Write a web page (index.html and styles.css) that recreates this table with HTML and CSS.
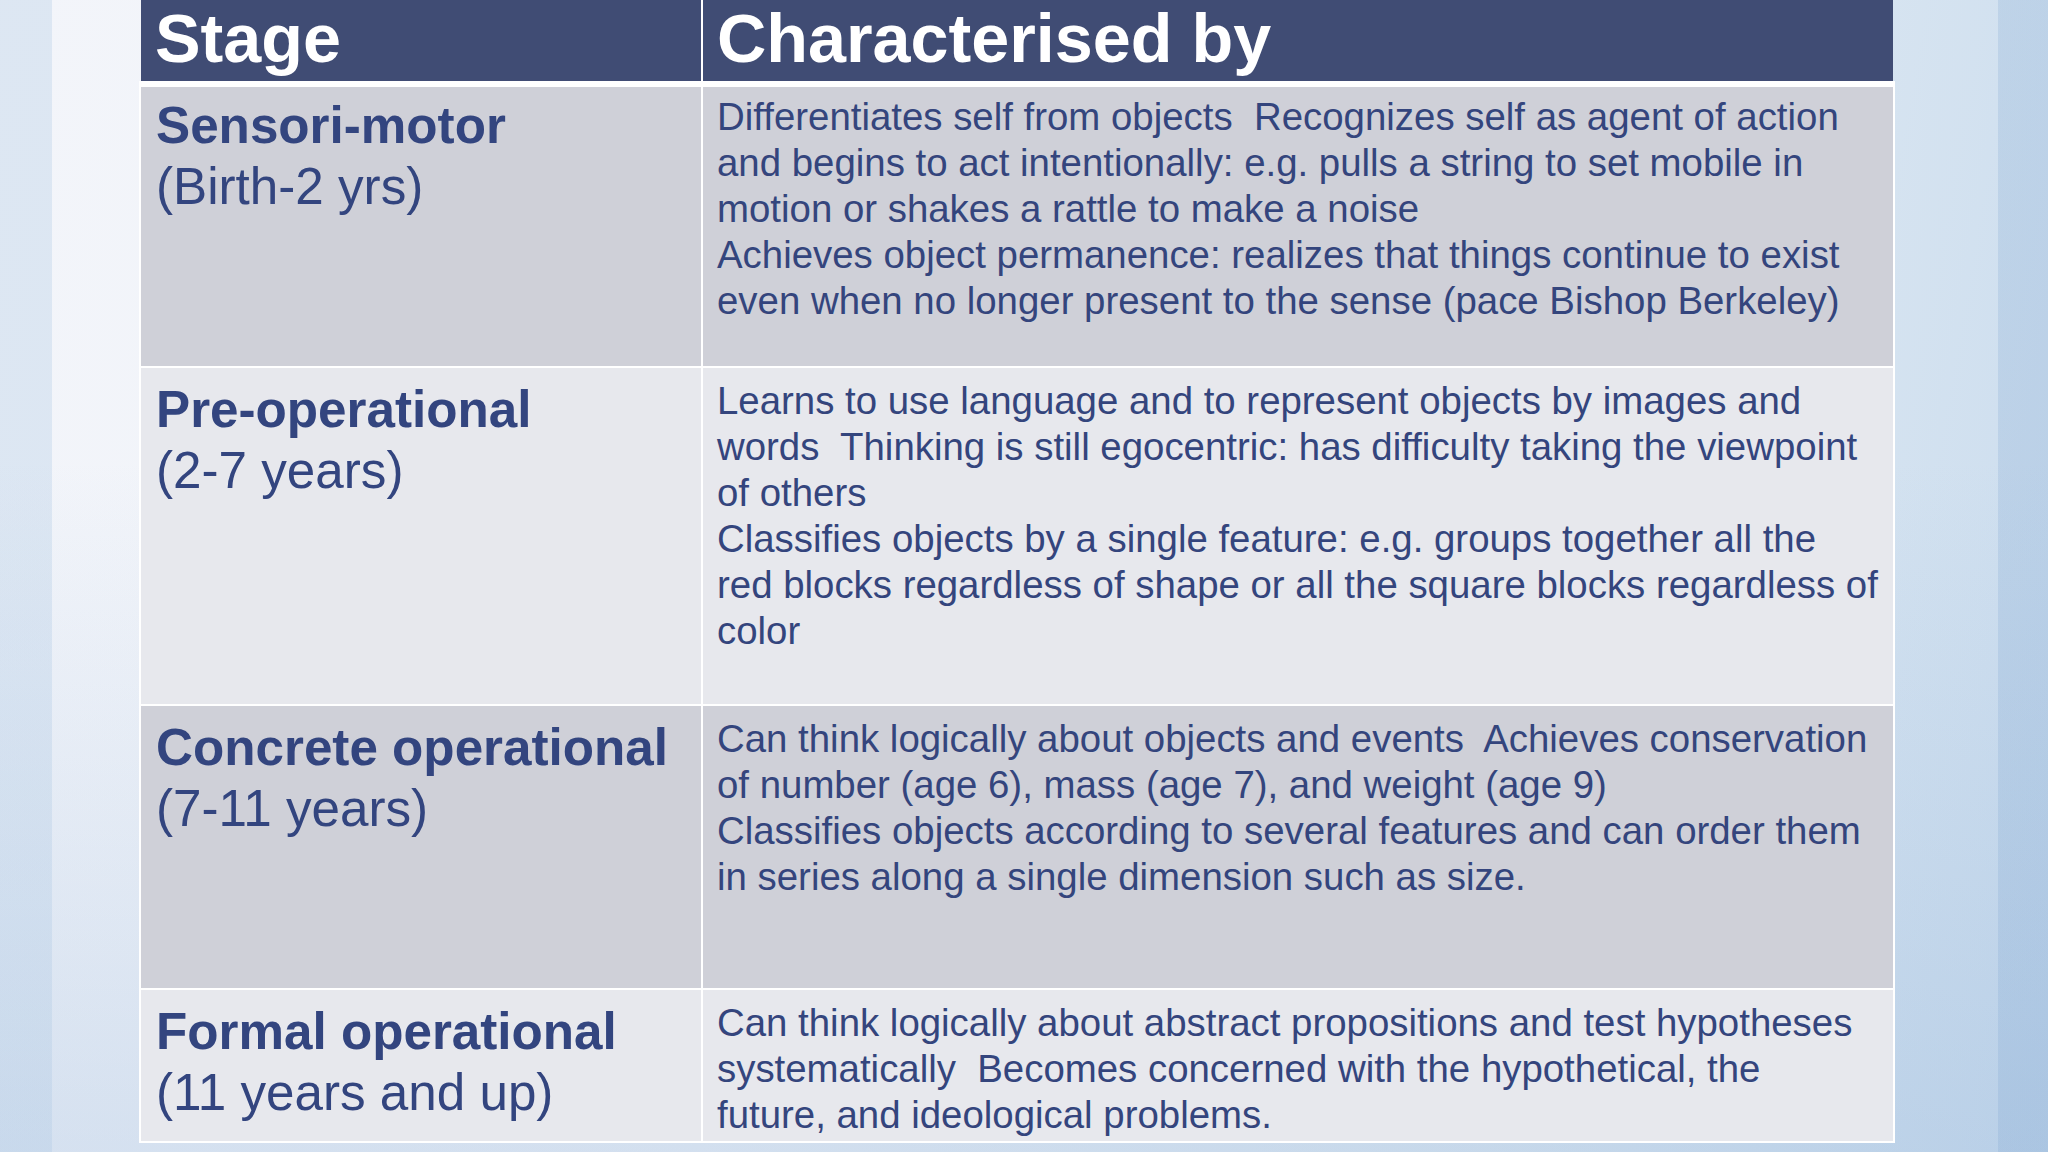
FILE: index.html
```html
<!DOCTYPE html>
<html lang="en">
<head>
<meta charset="utf-8">
<title>Piaget's stages</title>
<link rel="stylesheet" href="styles.css">
</head>
<body>
<main class="slide">
  <section class="table">
    <div class="head">
      <div class="hcell">Stage</div>
      <div class="hcell">Characterised by</div>
    </div>
    <div class="rows">
      <div class="stage odd first"><strong>Sensori-motor</strong><br>(Birth-2 yrs)</div>
      <div class="desc odd first">Differentiates self from objects&nbsp; Recognizes self as agent of action<br>and begins to act intentionally: e.g. pulls a string to set mobile in<br>motion or shakes a rattle to make a noise<br>Achieves object permanence: realizes that things continue to exist<br>even when no longer present to the sense (pace Bishop Berkeley)</div>

      <div class="stage even"><strong>Pre-operational</strong><br>(2-7 years)</div>
      <div class="desc even">Learns to use language and to represent objects by images and<br>words&nbsp; Thinking is still egocentric: has difficulty taking the viewpoint<br>of others<br>Classifies objects by a single feature: e.g. groups together all the<br>red blocks regardless of shape or all the square blocks regardless of<br>color</div>

      <div class="stage odd"><strong>Concrete operational</strong><br>(7-11 years)</div>
      <div class="desc odd">Can think logically about objects and events&nbsp; Achieves conservation<br>of number (age 6), mass (age 7), and weight (age 9)<br>Classifies objects according to several features and can order them<br>in series along a single dimension such as size.</div>

      <div class="stage even"><strong>Formal operational</strong><br>(11 years and up)</div>
      <div class="desc even">Can think logically about abstract propositions and test hypotheses<br>systematically&nbsp; Becomes concerned with the hypothetical, the<br>future, and ideological problems.</div>
    </div>
  </section>
</main>
</body>
</html>
```

FILE: styles.css
```css
html, body {
  margin: 0;
  padding: 0;
  width: 2048px;
  height: 1152px;
  overflow: hidden;
}

body {
  font-family: "Liberation Sans", Arial, sans-serif;
  background:
    linear-gradient(to right,
      rgba(170, 198, 226, 0.30) 0, rgba(170, 198, 226, 0.30) 52px,
      rgba(255, 255, 255, 0) 52px, rgba(255, 255, 255, 0) 1998px,
      rgba(120, 160, 205, 0.22) 1998px),
    linear-gradient(to bottom, rgba(140, 175, 215, 0) 40%, rgba(140, 175, 215, 0.28) 100%),
    linear-gradient(100deg, #f3f5fa 0%, #eef2f8 40%, #dde8f2 75%, #cadcee 100%);
}

.slide {
  display: flex;
  padding-left: 139px;
}

.table {
  width: 1756px;
  display: flex;
  flex-direction: column;
}

.head {
  display: grid;
  grid-template-columns: 560px 1190px;
  column-gap: 2px;
  margin: 0 2px;
  height: 81px;
  background: #ffffff;
}

.hcell {
  background: #404c74;
  color: #ffffff;
  font-weight: bold;
  font-size: 68.3px;
  line-height: 77px;
  padding-left: 14px;
}

.rows {
  display: grid;
  grid-template-columns: 560px 1190px;
  grid-template-rows: 279px 336px 282px 151px;
  gap: 2px;
  padding: 6px 2px 2px 2px;
  background: #ffffff;
}

.odd { background: #cfd0d8; }
.even { background: #e7e8ed; }

.stage {
  color: #33457f;
  font-size: 51.2px;
  line-height: 61px;
  padding: 11px 14px 0 15px;
  white-space: nowrap;
}

.stage strong { font-weight: bold; }

.desc {
  color: #34457d;
  font-size: 38.4px;
  line-height: 46px;
  padding: 10px 10px 0 14px;
  white-space: nowrap;
}

.stage.first { padding-top: 7.5px; }
.desc.first { padding-top: 6.5px; }
```
